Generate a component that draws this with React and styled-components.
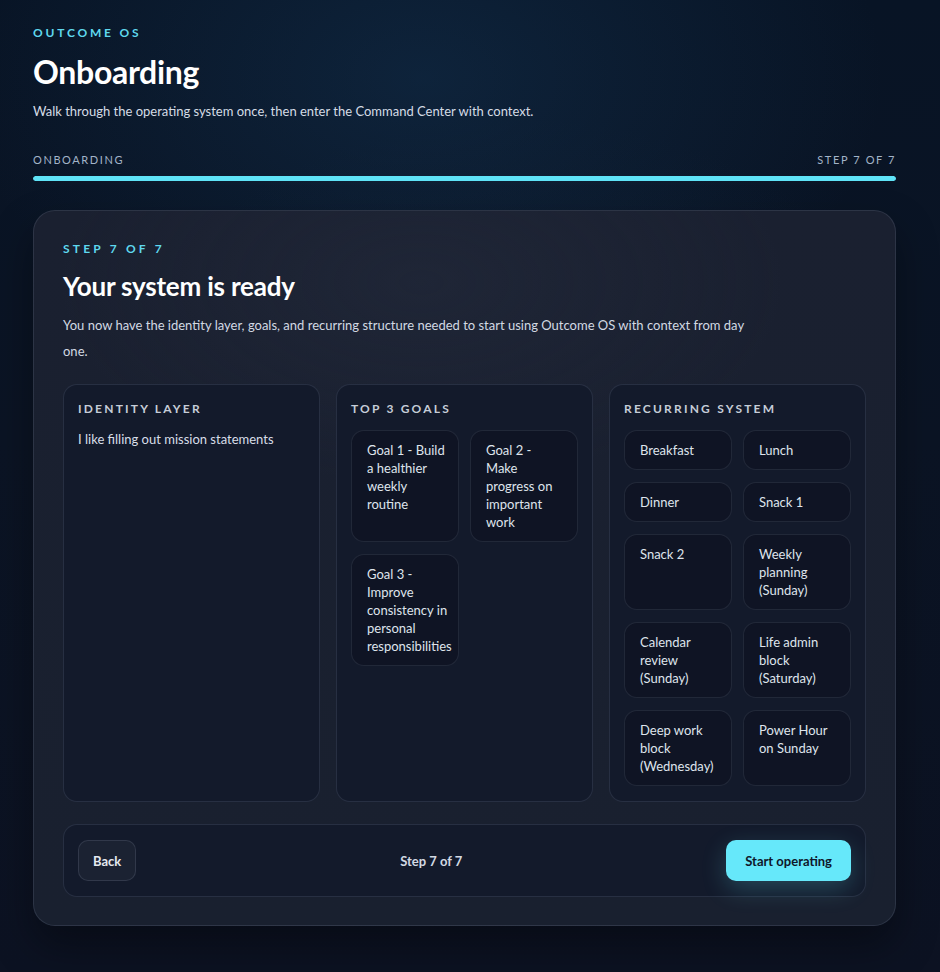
import React from 'react'
import styled, { createGlobalStyle } from 'styled-components'

const GlobalStyle = createGlobalStyle`
  * { box-sizing: border-box; }
  html, body {
    margin: 0;
    padding: 0;
    background: #0b1120;
  }
  body {
    font-family: 'Segoe UI', Lato, 'Noto Sans', sans-serif;
    color: #e5e9f0;
    -webkit-font-smoothing: antialiased;
  }
`

// nbsp keeps "consistency in" on one line like the design
const goals = [
  'Goal 1 - Build a healthier weekly routine',
  'Goal 2 - Make progress on important work',
  'Goal 3 - Improve consistency\u00a0in personal responsibilities',
]

const recurring = [
  'Breakfast',
  'Lunch',
  'Dinner',
  'Snack 1',
  'Snack 2',
  'Weekly planning (Sunday)',
  'Calendar review (Sunday)',
  'Life admin block (Saturday)',
  'Deep work block (Wednesday)',
  'Power Hour on Sunday',
]

const App = () => {
  return (
    <Page>
      <GlobalStyle />
      <Header>
        <Eyebrow>Outcome OS</Eyebrow>
        <Title>Onboarding</Title>
        <Subtitle>
          Walk through the operating system once, then enter the Command Center with context.
        </Subtitle>
      </Header>

      <Progress>
        <ProgressLabels>
          <span>Onboarding</span>
          <span>Step 7 of 7</span>
        </ProgressLabels>
        <Track>
          <Fill style={{ width: `${(7 / 7) * 100}%` }} />
        </Track>
      </Progress>

      <Card>
        <StepLabel>Step 7 of 7</StepLabel>
        <CardTitle>Your system is ready</CardTitle>
        <CardText>
          You now have the identity layer, goals, and recurring structure needed to start using
          Outcome OS with context from day one.
        </CardText>

        <Columns>
          <Panel>
            <PanelTitle>Identity layer</PanelTitle>
            <PanelText>I like filling out mission statements</PanelText>
          </Panel>
          <Panel>
            <PanelTitle>Top 3 goals</PanelTitle>
            <ChipGrid>
              {goals.map((g) => (
                <Chip key={g}>{g}</Chip>
              ))}
            </ChipGrid>
          </Panel>
          <Panel>
            <PanelTitle>Recurring system</PanelTitle>
            <ChipGrid>
              {recurring.map((r) => (
                <Chip key={r}>{r}</Chip>
              ))}
            </ChipGrid>
          </Panel>
        </Columns>

        <Footer>
          <BackButton>Back</BackButton>
          <FooterStep>Step 7 of 7</FooterStep>
          <PrimaryButton>Start operating</PrimaryButton>
        </Footer>
      </Card>
    </Page>
  )
}

const Page = styled.div`
  min-height: 972px;
  padding: 25px 44px 46px 33px;
  background:
    radial-gradient(ellipse 70% 45% at 45% 8%, rgba(22, 58, 92, 0.4), transparent 70%),
    radial-gradient(ellipse 60% 40% at 55% 40%, rgba(40, 60, 80, 0.16), transparent 70%),
    linear-gradient(180deg, #081425 0%, #0b1424 45%, #0c1222 100%);
`

const Header = styled.header`
  display: flex;
  flex-direction: column;
`

const Eyebrow = styled.div`
  font-size: 12px;
  font-weight: 700;
  letter-spacing: 2.8px;
  text-transform: uppercase;
  color: #5fd8ee;
  line-height: 16px;
`

const Title = styled.h1`
  margin: 12px 0 0;
  font-size: 32px;
  line-height: 38px;
  font-weight: 700;
  color: #ffffff;
  letter-spacing: -0.3px;
`

const Subtitle = styled.p`
  margin: 11px 0 0;
  font-size: 13px;
  line-height: 18px;
  color: #d5dce6;
`

const Progress = styled.div`
  margin-top: 33px;
  display: flex;
  flex-direction: column;
  gap: 9px;
`

const ProgressLabels = styled.div`
  display: flex;
  justify-content: space-between;
  font-size: 11px;
  line-height: 14px;
  letter-spacing: 1.6px;
  text-transform: uppercase;
  color: #a3b4c8;
`

const Track = styled.div`
  height: 5px;
  border-radius: 3px;
  background: rgba(255, 255, 255, 0.08);
  overflow: hidden;
`

const Fill = styled.div`
  height: 100%;
  border-radius: 3px;
  background: #5fe3f7;
  box-shadow: 0 0 10px rgba(95, 227, 247, 0.35);
`

const Card = styled.section`
  margin-top: 29px;
  padding: 30px 29px 28px;
  border-radius: 22px;
  border: 1px solid rgba(148, 163, 184, 0.16);
  background:
    radial-gradient(ellipse 60% 40% at 45% 10%, rgba(40, 48, 66, 0.35), transparent 70%),
    linear-gradient(180deg, #1a2030 0%, #19202f 100%);
  box-shadow: 0 20px 40px rgba(0, 0, 0, 0.35);
`

const StepLabel = styled.div`
  font-size: 12px;
  font-weight: 700;
  letter-spacing: 3.2px;
  text-transform: uppercase;
  color: #5fd8ee;
  line-height: 16px;
`

const CardTitle = styled.h2`
  margin: 12px 0 0;
  font-size: 26px;
  line-height: 34px;
  font-weight: 700;
  color: #ffffff;
  letter-spacing: -0.2px;
`

const CardText = styled.p`
  margin: 9px 0 0;
  max-width: 690px;
  font-size: 13px;
  line-height: 26px;
  color: #d2d9e3;
`

const Columns = styled.div`
  margin-top: 20px;
  display: grid;
  grid-template-columns: repeat(3, minmax(0, 1fr));
  gap: 16px;
`

const Panel = styled.div`
  padding: 16px 14px 15px;
  border-radius: 14px;
  border: 1px solid rgba(148, 163, 184, 0.16);
  background: #131a2b;
`

const PanelTitle = styled.h3`
  margin: 0;
  font-size: 12px;
  line-height: 16px;
  font-weight: 700;
  letter-spacing: 2.2px;
  text-transform: uppercase;
  color: #c6cdd8;
`

const PanelText = styled.p`
  margin: 13px 0 0;
  font-size: 13px;
  line-height: 18px;
  color: #d8dee8;
`

const ChipGrid = styled.div`
  margin-top: 13px;
  display: grid;
  grid-template-columns: repeat(2, minmax(0, 1fr));
  gap: 12px 11px;
`

const Chip = styled.div`
  padding: 10px 12px 10px 15px;
  border-radius: 13px;
  border: 1px solid rgba(148, 163, 184, 0.14);
  background: #0f1424;
  font-size: 13px;
  line-height: 18px;
  color: #dfe4ec;
`

const Footer = styled.div`
  margin-top: 22px;
  padding: 15px 14px;
  display: flex;
  align-items: center;
  justify-content: space-between;
  border-radius: 14px;
  border: 1px solid rgba(148, 163, 184, 0.16);
  background: #131a2b;
`

const BaseButton = styled.button`
  height: 41px;
  padding: 0 14px;
  border-radius: 10px;
  font-family: inherit;
  font-size: 13px;
  font-weight: 700;
  cursor: pointer;
`

const BackButton = styled(BaseButton)`
  border: 1px solid rgba(148, 163, 184, 0.18);
  background: #1b2232;
  color: #e5e9f0;
`

const FooterStep = styled.span`
  font-size: 13px;
  font-weight: 700;
  color: #d2d9e3;
`

const PrimaryButton = styled(BaseButton)`
  padding: 0 19px;
  border: none;
  background: #66e8fa;
  color: #0f172a;
  box-shadow: 0 8px 24px rgba(102, 232, 250, 0.22);
`

export default App
